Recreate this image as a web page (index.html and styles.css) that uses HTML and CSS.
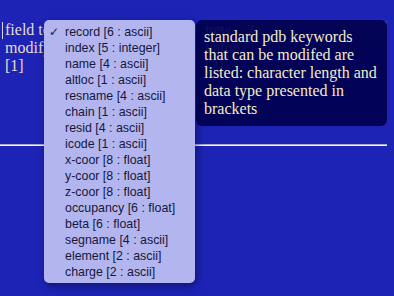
FILE: index.html
```html
<!DOCTYPE html>
<html>
<head>
<meta charset="utf-8">
<link rel="stylesheet" href="styles.css">
</head>
<body>
<div class="page">
  <div class="row">
    <span class="caret"></span>
    <div class="label">field to modify [1]</div>
    <div class="select-slot"></div>
    <div class="label2">new value [2]</div>
    <div class="input">7</div>
  </div>
  <div class="rule"></div>

  <ul class="menu">
    <li><span class="check">✓</span><span>record [6 : ascii]</span></li>
    <li><span class="check"></span><span>index [5 : integer]</span></li>
    <li><span class="check"></span><span>name [4 : ascii]</span></li>
    <li><span class="check"></span><span>altloc [1 : ascii]</span></li>
    <li><span class="check"></span><span>resname [4 : ascii]</span></li>
    <li><span class="check"></span><span>chain [1 : ascii]</span></li>
    <li><span class="check"></span><span>resid [4 : ascii]</span></li>
    <li><span class="check"></span><span>icode [1 : ascii]</span></li>
    <li><span class="check"></span><span>x-coor [8 : float]</span></li>
    <li><span class="check"></span><span>y-coor [8 : float]</span></li>
    <li><span class="check"></span><span>z-coor [8 : float]</span></li>
    <li><span class="check"></span><span>occupancy [6 : float]</span></li>
    <li><span class="check"></span><span>beta [6 : float]</span></li>
    <li><span class="check"></span><span>segname [4 : ascii]</span></li>
    <li><span class="check"></span><span>element [2 : ascii]</span></li>
    <li><span class="check"></span><span>charge [2 : ascii]</span></li>
  </ul>

  <div class="tooltip">standard pdb keywords that can be modifed are listed: character length and data type presented in brackets</div>
</div>
</body>
</html>
```

FILE: styles.css
```css
html, body {
  margin: 0;
  padding: 0;
  background: #1d23b5;
  width: 394px;
  height: 296px;
  overflow: hidden;
}
.page {
  position: relative;
  width: 394px;
  height: 296px;
}
.row {
  display: flex;
  align-items: flex-start;
  padding-top: 21px;
  height: 144px;
  box-sizing: border-box;
}
.caret {
  flex: none;
  width: 1px;
  height: 17px;
  margin-left: 2px;
  margin-top: 1px;
  margin-right: 2px;
  background: #d8d4e0;
}
.label {
  flex: none;
  width: 50px;
  font-family: "Liberation Serif", serif;
  font-size: 16px;
  line-height: 18px;
  color: #e4ded0;
}
.select-slot {
  flex: none;
  width: 150px;
}
.label2 {
  flex: none;
  width: 36px;
  font-family: "Liberation Serif", serif;
  font-size: 16px;
  line-height: 18px;
  color: #e4ded0;
}
.input {
  flex: none;
  width: 140px;
  height: 18px;
  background: #3a3fb8;
  font-family: "Liberation Sans", sans-serif;
  font-size: 13px;
  line-height: 18px;
  color: #e4ded0;
  padding-left: 6px;
}
.rule {
  width: 387px;
  height: 0;
  border-top: 1px solid #a9aacb;
  border-bottom: 1px solid #f2f2f2;
}
.menu {
  position: absolute;
  left: 44px;
  top: 20px;
  width: 151px;
  height: 263px;
  box-sizing: border-box;
  margin: 0;
  padding: 4px 0 0 0;
  list-style: none;
  background: #b3b6ee;
  border-radius: 5px;
  box-shadow: 2px 3px 8px rgba(0, 0, 40, 0.45);
}
.menu li {
  display: flex;
  height: 16px;
  line-height: 16px;
  font-family: "Liberation Sans", sans-serif;
  font-size: 12.4px;
  color: #161640;
  white-space: nowrap;
}
.check {
  flex: none;
  width: 16px;
  padding-left: 5px;
  font-family: "DejaVu Sans", sans-serif;
  font-size: 12px;
}
.tooltip {
  position: absolute;
  left: 196px;
  top: 20px;
  width: 191px;
  height: 106px;
  box-sizing: border-box;
  padding: 8px 8px;
  background: rgba(0, 0, 80, 0.93);
  border-radius: 6px;
  font-family: "Liberation Serif", serif;
  font-size: 16px;
  line-height: 18px;
  color: #f4ecc8;
}
```
